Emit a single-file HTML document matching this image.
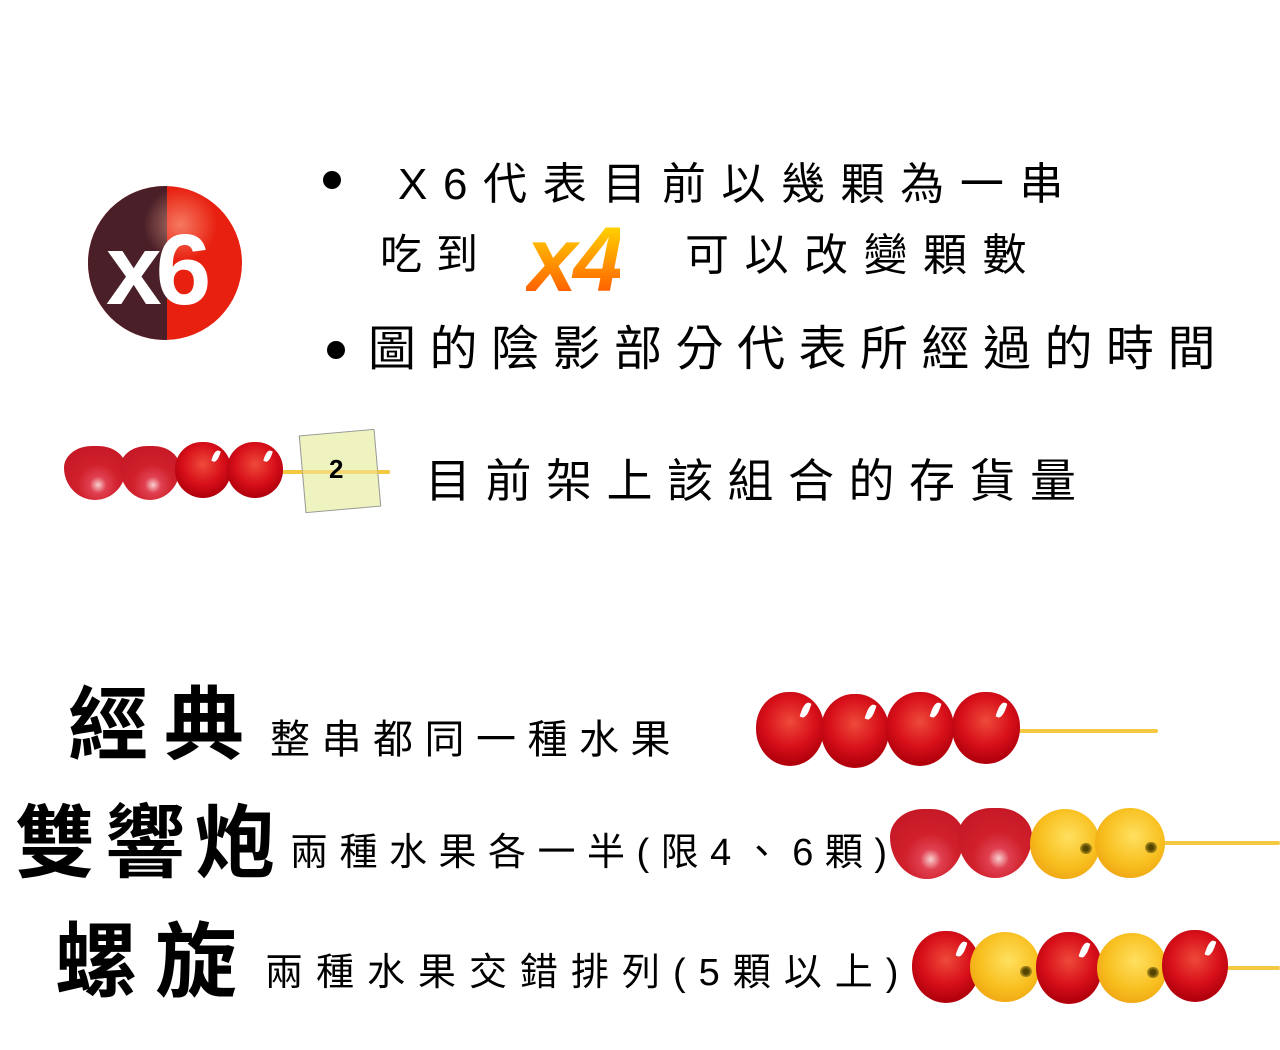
<!DOCTYPE html>
<html><head><meta charset="utf-8"><style>
body{margin:0;width:1280px;height:1050px;background:#fff;position:relative;overflow:hidden;font-family:"Liberation Sans","Noto Sans CJK TC",sans-serif;color:#000}
.a{position:absolute;white-space:nowrap;line-height:1}
.dot{position:absolute;width:18px;height:18px;border-radius:50%;background:#000}
.stick{position:absolute;height:4px;background:#f5c842;border-radius:2px}
.ball{position:absolute;border-radius:48% 48% 50% 50%;background:radial-gradient(circle at 50% 40%,#ee4a3a 0%,#d8101a 45%,#b0000c 75%,#d8101a 100%)}
.ball::after{content:"";position:absolute;right:22%;top:14%;width:10%;height:22%;background:#fff;border-radius:60% 10% 60% 10%;transform:rotate(20deg)}
.org{position:absolute;border-radius:50%;background:radial-gradient(circle at 55% 40%,#ffe060 0%,#f8c020 50%,#eea010 85%,#e08a10 100%)}
.org::after{content:"";position:absolute;right:12%;top:48%;width:16%;height:16%;border-radius:50%;background:radial-gradient(circle,#554400 30%,#b09020 70%)}
.straw{position:absolute;border-radius:45% 45% 50% 50%/40% 40% 60% 60%;background:radial-gradient(circle at 55% 72%,#f8d0d0 0%,#e04050 16%,#d0202c 40%,#c01422 100%)}
</style></head><body>

<div style="position:absolute;left:88px;top:186px;width:154px;height:154px;border-radius:50%;overflow:hidden;background:#e82010">
 <div style="position:absolute;left:0;top:0;width:79px;height:154px;background:#4a1f28"></div>
 <div style="position:absolute;left:0;top:0;width:154px;height:154px;background:radial-gradient(circle at 60% 25%,rgba(255,180,150,.6) 0%,rgba(255,255,255,0) 25%)"></div>
 <div class="a" style="left:18px;top:34px;font-size:100px;font-weight:bold;color:#fff;letter-spacing:-6px">x6</div>
</div>

<div class="dot" style="left:323px;top:171px"></div>
<div class="a" style="left:398px;top:163px;font-size:44px;letter-spacing:15.6px">X6代表目前以幾顆為一串</div>
<div class="a" style="left:380px;top:234px;font-size:42px;letter-spacing:14px">吃到</div>
<div class="a" style="left:526px;top:214px;font-size:92px;font-weight:bold;font-style:italic;color:#f8a000;background:linear-gradient(#ffe800,#ff4800);-webkit-background-clip:text;background-clip:text;-webkit-text-fill-color:transparent;letter-spacing:-4px">x4</div>
<div class="a" style="left:685px;top:234px;font-size:44px;letter-spacing:15.5px">可以改變顆數</div>
<div class="dot" style="left:327px;top:341px"></div>
<div class="a" style="left:368px;top:326px;font-size:48px;letter-spacing:13.5px">圖的陰影部分代表所經過的時間</div>

<div class="stick" style="left:270px;top:470px;width:120px"></div>
<div class="straw" style="left:64px;top:446px;width:62px;height:54px"></div>
<div class="straw" style="left:120px;top:446px;width:60px;height:54px"></div>
<div class="ball" style="left:175px;top:442px;width:56px;height:56px"></div>
<div class="ball" style="left:227px;top:442px;width:56px;height:56px"></div>
<div style="position:absolute;left:302px;top:432px;width:74px;height:76px;background:#eef3c0;border:1px solid #999;transform:rotate(-5deg)"></div>
<div class="stick" style="left:302px;top:470px;width:88px;opacity:.6"></div>
<div class="a" style="left:329px;top:456px;font-size:26px;font-weight:bold">2</div>
<div class="a" style="left:425px;top:458px;font-size:46px;letter-spacing:14.5px">目前架上該組合的存貨量</div>

<div class="a" style="left:68px;top:686px;font-size:80px;font-weight:bold;letter-spacing:16px">經典</div>
<div class="a" style="left:270px;top:720px;font-size:40px;letter-spacing:11.5px">整串都同一種水果</div>
<div class="stick" style="left:1000px;top:729px;width:158px"></div>
<div class="ball" style="left:756px;top:692px;width:68px;height:74px"></div>
<div class="ball" style="left:821px;top:694px;width:68px;height:74px"></div>
<div class="ball" style="left:886px;top:692px;width:68px;height:74px"></div>
<div class="ball" style="left:952px;top:692px;width:68px;height:72px"></div>

<div class="a" style="left:15px;top:804px;font-size:80px;font-weight:bold;letter-spacing:10px">雙響炮</div>
<div class="a" style="left:290px;top:834px;font-size:38px;letter-spacing:11.5px">兩種水果各一半(限4、6顆)</div>
<div class="stick" style="left:1150px;top:841px;width:130px"></div>
<div class="straw" style="left:890px;top:809px;width:74px;height:70px"></div>
<div class="straw" style="left:958px;top:808px;width:74px;height:70px"></div>
<div class="org" style="left:1030px;top:809px;width:70px;height:70px"></div>
<div class="org" style="left:1095px;top:808px;width:70px;height:70px"></div>

<div class="a" style="left:55px;top:922px;font-size:82px;font-weight:bold;letter-spacing:18px">螺旋</div>
<div class="a" style="left:265px;top:954px;font-size:38px;letter-spacing:13px">兩種水果交錯排列(5顆以上)</div>
<div class="stick" style="left:1220px;top:966px;width:60px"></div>
<div class="ball" style="left:912px;top:931px;width:68px;height:72px"></div>
<div class="org" style="left:970px;top:932px;width:70px;height:70px"></div>
<div class="ball" style="left:1036px;top:932px;width:66px;height:72px"></div>
<div class="org" style="left:1097px;top:933px;width:70px;height:70px"></div>
<div class="ball" style="left:1162px;top:930px;width:66px;height:72px"></div>
</body></html>
